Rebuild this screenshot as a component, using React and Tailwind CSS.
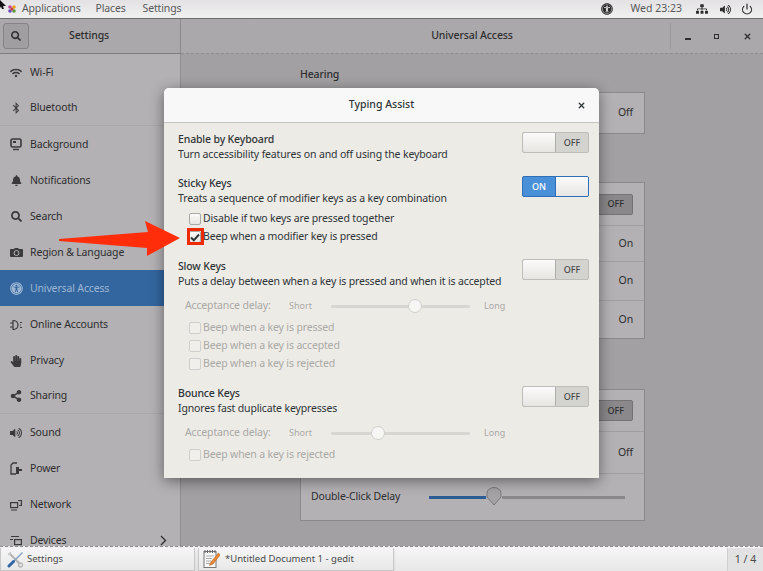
import {
  FaBell,
  FaBluetoothB,
  FaHandPaper,
  FaSearch,
  FaShareAlt,
  FaSitemap,
  FaUniversalAccess,
  FaVolumeUp,
  FaWifi,
} from 'react-icons/fa';
import { Power, X } from 'lucide-react';

const font = 'font-["Noto_Sans",sans-serif]';

// small symbolic icons that the packages don't have
function BackgroundIcon() {
  return (
    <svg width="12" height="13" viewBox="0 0 12 13" fill="none">
      <rect x="1" y="1" width="10" height="8" rx="1.5" stroke="#3a3a3c" strokeWidth="1.6" />
      <rect x="3" y="3" width="3" height="2" fill="#3a3a3c" />
      <path d="M3 11.5h6" stroke="#3a3a3c" strokeWidth="1.4" />
    </svg>
  );
}

function RegionIcon() {
  return (
    <svg width="13" height="11" viewBox="0 0 13 11">
      <path d="M1 2h3l1-1h3l1 1h3a1 1 0 0 1 1 1v6a1 1 0 0 1-1 1H1a1 1 0 0 1-1-1V3a1 1 0 0 1 1-1z" fill="#3a3a3c" />
      <circle cx="6.5" cy="6" r="2.5" fill="none" stroke="#b3b1b3" strokeWidth="1" />
    </svg>
  );
}

function AccountsIcon() {
  return (
    <svg width="13" height="12" viewBox="0 0 13 12" fill="none" stroke="#3a3a3c" strokeWidth="1.2">
      <path d="M0 4h3M0 8h3M3 1.5c3 0 5 2 5 4.5s-2 4.5-5 4.5z" />
      <path d="M10 3.5h2M10 6h1M10 8.5h2" strokeWidth="1" />
    </svg>
  );
}

function PowerIcon() {
  return (
    <svg width="12" height="13" viewBox="0 0 12 13" fill="none">
      <path d="M7 1H3L1 3v9h5" stroke="#3a3a3c" strokeWidth="1.3" />
      <path d="M6 5h3v2h3v2H9v3H6z" fill="#3a3a3c" />
    </svg>
  );
}

function NetworkIcon() {
  return (
    <svg width="12" height="12" viewBox="0 0 12 12" fill="none" stroke="#3a3a3c" strokeWidth="1.2">
      <rect x="0.6" y="3.6" width="7" height="5" />
      <path d="M1 11h6M8 1.5h3.4v5H9" />
    </svg>
  );
}

function DevicesIcon() {
  return (
    <svg width="12" height="11" viewBox="0 0 12 11" fill="none" stroke="#3a3a3c" strokeWidth="1.2">
      <path d="M1 1.5h8M0 4.5h3" />
      <rect x="4.6" y="4.6" width="6.8" height="5" />
    </svg>
  );
}

function FootLogo() {
  return (
    <svg width="10" height="10" viewBox="0 0 10 10">
      <circle cx="3" cy="3" r="1.8" fill="#c04a9a" />
      <circle cx="7" cy="3" r="1.8" fill="#e8a020" />
      <circle cx="3" cy="7" r="1.8" fill="#6a4ac0" />
      <circle cx="7" cy="7" r="1.8" fill="#5a9a40" />
      <circle cx="5" cy="5" r="1.5" fill="#d04040" />
    </svg>
  );
}

function SettingsAppIcon() {
  return (
    <svg width="17" height="17" viewBox="0 0 17 17" fill="none">
      <path d="M3 3l10 10" stroke="#b4b4b4" strokeWidth="2.2" />
      <path d="M1 3l2 .5.5-2.5" stroke="#c4c4c4" strokeWidth="1.6" />
      <path d="M15.5 1.5L6 11" stroke="#8aa4c4" strokeWidth="1.4" />
      <path d="M6.5 10.5L2 15" stroke="#3465a4" strokeWidth="3" strokeLinecap="round" />
      <circle cx="13.5" cy="14" r="2" stroke="#b8b8b8" strokeWidth="1.4" />
    </svg>
  );
}

function GeditIcon() {
  return (
    <svg width="17" height="20" viewBox="0 0 17 20" fill="none">
      <rect x="1" y="2.5" width="12" height="16" fill="#fafafa" stroke="#777" />
      <path d="M2 1v3M4.5 1v3M7 1v3M9.5 1v3M12 1v3" stroke="#666" />
      <path d="M3 7h8M3 9.5h6M3 12h5M3 14.5h4" stroke="#aaa" />
      <path d="M15.5 4L8 13l-1.5 3.5L10 15l7-9z" fill="#e9883a" stroke="#b85f12" strokeWidth=".6" />
    </svg>
  );
}

function ThumbPin() {
  return (
    <svg width="16" height="20" viewBox="0 0 16 20" className="shrink-0 -my-[4px]">
      <path d="M1 6a7 5.5 0 0 1 14 0v4l-7 8-7-8z" fill="#a4a2a4" stroke="#7a787a" />
    </svg>
  );
}

const navItems = [
  { label: 'Wi-Fi', icon: <FaWifi size={12} color="#3a3a3c" /> },
  { label: 'Bluetooth', icon: <FaBluetoothB size={12} color="#3a3a3c" />, divider: true },
  { label: 'Background', icon: <BackgroundIcon /> },
  { label: 'Notifications', icon: <FaBell size={11} color="#3a3a3c" /> },
  { label: 'Search', icon: <FaSearch size={11} color="#3a3a3c" /> },
  { label: 'Region & Language', icon: <RegionIcon /> },
  { label: 'Universal Access', icon: <FaUniversalAccess size={13} color="#9db6d4" />, active: true },
  { label: 'Online Accounts', icon: <AccountsIcon /> },
  { label: 'Privacy', icon: <FaHandPaper size={12} color="#3a3a3c" /> },
  { label: 'Sharing', icon: <FaShareAlt size={12} color="#3a3a3c" />, divider: true },
  { label: 'Sound', icon: <FaVolumeUp size={12} color="#3a3a3c" /> },
  { label: 'Power', icon: <PowerIcon /> },
  { label: 'Network', icon: <NetworkIcon /> },
  { label: 'Devices', icon: <DevicesIcon />, more: true },
];

function TopBar() {
  return (
    <div className="h-[19px] shrink-0 flex items-center bg-gradient-to-b from-[#e4e2e4] to-[#f0f0f0] border-b border-[#6f6d6f] pl-[7px] pr-[10px] text-[10.5px] tracking-[-0.15px] text-[#59595b]">
      <FootLogo />
      <span className="ml-[5px]">Applications</span>
      <span className="ml-[15px]">Places</span>
      <span className="ml-[17px]">Settings</span>
      <div className="ml-auto flex items-center">
        <FaUniversalAccess size={12} color="#2e2e2e" />
        <span className="ml-[17px] tracking-normal">Wed 23:23</span>
        <FaSitemap size={12} color="#2e2e2e" className="ml-[14px]" />
        <FaVolumeUp size={11} color="#2e2e2e" className="ml-[12px]" />
        <Power size={12} color="#2e2e2e" strokeWidth={2.4} className="ml-[10px]" />
      </div>
    </div>
  );
}

function HeaderBar() {
  return (
    <div className="h-[35px] shrink-0 flex bg-[#aaa8aa] border-b border-[#7f7d7f] text-[10.5px] tracking-[-0.1px] font-medium text-[#2e2e30]">
      <div className="w-[181px] shrink-0 flex items-center border-r border-[#8b898b] pl-[3px]">
        <div className="w-[26px] h-[26px] flex items-center justify-center rounded-[3px] border border-[#858385] bg-[#a09ea0]">
          <FaSearch size={10} color="#2e2e30" />
        </div>
        <span className="ml-[40px]">Settings</span>
      </div>
      <div className="w-[93px] shrink-0" />
      <div className="flex-1 flex items-center justify-center">Universal Access</div>
      <div className="w-[93px] shrink-0 flex items-center my-[4px] border-l border-[#999799] pl-[14px] gap-[20px]">
        <div className="w-[6px] h-[2px] mt-[5px] bg-[#2e2e30]" />
        <div className="w-[5px] h-[5px] ml-[3px] border border-[#2e2e30]" />
        <X size={9} strokeWidth={3.5} color="#2e2e30" className="ml-[4px]" />
      </div>
    </div>
  );
}

function Sidebar() {
  return (
    <div className="w-[181px] shrink-0 bg-[#b3b1b3] border-r border-[#8f8d8f] overflow-hidden text-[10.5px] tracking-[-0.15px] text-[#2e2e30]">
      {navItems.map((item) => (
        <div
          key={item.label}
          className={`h-9 flex items-center pl-[9px] pt-px ${item.active ? 'bg-[#33669f] text-[#9db6d4]' : ''} ${item.divider ? 'border-b border-[#aaa8aa]' : ''}`}
        >
          <span className="w-[14px] flex justify-center">{item.icon}</span>
          <span className="ml-[7px]">{item.label}</span>
          {item.more && (
            <svg width="7" height="11" viewBox="0 0 7 11" fill="none" className="ml-auto mr-[13px]">
              <path d="M1 1l4.5 4.5L1 10" stroke="#2e2e30" strokeWidth="1.3" />
            </svg>
          )}
        </div>
      ))}
    </div>
  );
}

function BackRow({ label, children, h, last }) {
  return (
    <div className={`flex items-center justify-between pl-[10px] pr-[11px] ${last ? '' : 'border-b border-[#a09ea0]'}`} style={{ height: h }}>
      <span>{label}</span>
      {children}
    </div>
  );
}

function BackToggle() {
  return (
    <div className="w-[60px] h-[21px] flex justify-end items-center border border-[#747274] rounded-[2px] bg-[#8a888a] pr-[8px] text-[9px] font-medium tracking-normal text-[#2e2e30]">OFF</div>
  );
}

// settings page behind the dialog
function Content() {
  return (
    <div className="flex-1 bg-[#a2a0a2] border-t border-dashed border-[#8f8d8f] -mt-px pl-[119px] text-[10.5px] tracking-[-0.15px] text-[#2e2e30] overflow-hidden">
      <div className="w-[345px]">
        <div className="h-[38px] flex items-end pb-[9px] font-medium">Hearing</div>
        <div className="h-[42px] border border-[#8b898b] bg-[#b3b1b3] flex items-center justify-end pr-[11px]">Off</div>
        <div className="mt-[48px] border border-[#8b898b] bg-[#b3b1b3]">
          <BackRow label="" h={43}><BackToggle /></BackRow>
          <BackRow label="" h={36}>On</BackRow>
          <BackRow label="" h={39}>On</BackRow>
          <BackRow label="" h={37} last>On</BackRow>
        </div>
        <div className="mt-[50px] border border-[#8b898b] bg-[#b3b1b3]">
          <BackRow label="" h={42}><BackToggle /></BackRow>
          <BackRow label="" h={42}>Off</BackRow>
          <BackRow label="Double-Click Delay" h={46} last>
            <div className="w-[196px] mr-[8px] flex items-center">
              <div className="w-[57px] h-[3px] bg-[#2c5c94]" />
              <ThumbPin />
              <div className="flex-1 h-[3px] bg-[#8a888a]" />
            </div>
          </BackRow>
        </div>
      </div>
    </div>
  );
}

function Toggle({ on }) {
  const knob = <div className={`w-[33px] h-full bg-gradient-to-b from-[#fbfbfb] to-[#e6e5e2] ${on ? 'border-l border-[#2f6fb5]' : 'border-r border-[#adadaa] rounded-l-[2px]'}`} />;
  if (on) {
    return (
      <div className="w-[67px] h-[21px] flex border border-[#2f6fb5] rounded-[2px] overflow-hidden bg-[#4a90d9]">
        <div className="flex-1 flex items-center justify-center text-[9px] font-medium tracking-normal text-white">ON</div>
        {knob}
      </div>
    );
  }
  return (
    <div className="w-[67px] h-[21px] flex border border-[#bdbdb9] rounded-[2px] overflow-hidden bg-[#d3d3d0]">
      {knob}
      <div className="flex-1 flex items-center justify-center text-[9px] font-medium tracking-normal text-[#4a4a4a]">OFF</div>
    </div>
  );
}

function CheckRow({ label, checked, disabled }) {
  return (
    <div className={`h-[18px] flex items-center pl-[11px] ${disabled ? 'text-[#a9a9a5]' : 'text-[#2e3436]'}`}>
      <div className={`w-[12px] h-[12px] rounded-[2px] border flex items-center justify-center ${disabled ? 'border-[#cfcfcb] bg-[#f0efec]' : 'border-[#a9a9a5] bg-gradient-to-b from-[#fbfbfb] to-[#e6e5e2]'}`}>
        {checked && (
          <svg width="10" height="9" viewBox="0 0 10 9" fill="none">
            <path d="M1 4.5l2.8 2.8L9 1.5" stroke="#2e3436" strokeWidth="2" />
          </svg>
        )}
      </div>
      <span className="ml-[2px]">{label}</span>
    </div>
  );
}

function Delay({ left }) {
  return (
    <div className="h-[18px] flex items-center pl-[7px] text-[#a9a9a5]">
      <span className="w-[104px]">Acceptance delay:</span>
      <span className="w-[42px] text-[9px] tracking-normal">Short</span>
      <div className="w-[139px] flex items-center">
        <div className="h-[3px] bg-[#d6d6d2] rounded-l-full" style={{ width: left }} />
        <div className="w-[14px] h-[14px] shrink-0 rounded-full bg-[#f6f6f4] border border-[#cfcfcb]" />
        <div className="flex-1 h-[3px] bg-[#d6d6d2] rounded-r-full" />
      </div>
      <span className="ml-[14px] text-[9px] tracking-normal">Long</span>
    </div>
  );
}

function Section({ title, desc, on, className }) {
  return (
    <div className={`flex justify-between pl-[14px] pr-[10px] ${className}`}>
      <div className="leading-[15px] whitespace-nowrap">
        <div className="font-medium text-[#2e3436]">{title}</div>
        <div className="text-[#2e3436]">{desc}</div>
      </div>
      <Toggle on={on} />
    </div>
  );
}

function Dialog() {
  return (
    <div className="absolute left-[164px] top-[88px] w-[435px] h-[390px] rounded-t-[5px] bg-[#edebe6] shadow-[0_3px_14px_rgba(0,0,0,0.45)] text-[10.5px] tracking-[-0.15px] overflow-hidden">
      <div className="h-[35px] flex items-center justify-center relative bg-[#f8f8f8] border-b border-[#c4c3bf] font-medium tracking-normal text-[#2e3436]">
        Typing Assist
        <X size={9} strokeWidth={3.5} color="#2e3436" className="absolute right-[13px]" />
      </div>
      <div className="pt-[9px]">
        <Section title="Enable by Keyboard" desc="Turn accessibility features on and off using the keyboard" />
        <Section className="mt-[14px]" title="Sticky Keys" desc="Treats a sequence of modifier keys as a key combination" on />
        <div className="mt-[4px] pl-[14px]">
          <CheckRow label="Disable if two keys are pressed together" />
          <CheckRow label="Beep when a modifier key is pressed" checked />
        </div>
        <Section className="mt-[13px]" title="Slow Keys" desc="Puts a delay between when a key is pressed and when it is accepted" />
        <div className="mt-[8px] pl-[14px]">
          <Delay left={77} />
        </div>
        <div className="mt-[4px] pl-[14px]">
          <CheckRow label="Beep when a key is pressed" disabled />
          <CheckRow label="Beep when a key is accepted" disabled />
          <CheckRow label="Beep when a key is rejected" disabled />
        </div>
        <Section className="mt-[13px]" title="Bounce Keys" desc="Ignores fast duplicate keypresses" />
        <div className="mt-[8px] pl-[14px]">
          <Delay left={40} />
        </div>
        <div className="mt-[4px] pl-[14px]">
          <CheckRow label="Beep when a key is rejected" disabled />
        </div>
      </div>
    </div>
  );
}

function TaskBar() {
  return (
    <div className="h-[25px] shrink-0 flex items-stretch bg-gradient-to-b from-[#f6f6f6] to-[#e8e8e8] border-t border-dashed border-[#8f8d8f] text-[9.5px] text-[#4a4a4a] pt-px">
      <div className="w-[195px] flex items-center pl-[6px] border border-t-0 border-[#c8c8c8] shadow-sm">
        <SettingsAppIcon />
        <span className="ml-[3px]">Settings</span>
      </div>
      <div className="w-[196px] ml-[3px] flex items-center pl-[4px] border border-t-0 border-[#c8c8c8] shadow-sm">
        <GeditIcon />
        <span className="ml-[5px]">*Untitled Document 1 - gedit</span>
      </div>
      <div className="ml-auto w-[36px] flex items-center justify-center bg-[#e2e2e2] border-l border-[#d0d0d0] text-[10.5px]">1 / 4</div>
    </div>
  );
}

// red callout arrow and box from the annotated screenshot
function Callout() {
  return (
    <>
      <svg width="130" height="40" viewBox="0 0 130 40" className="absolute left-[56px] top-[220px]">
        <path d="M3 19L92 12L89 1L124 18L91 36L91 28L3 21z" fill="#ff2d0a" />
      </svg>
      <div className="absolute left-[187px] top-[228px] w-[17px] h-[17px] border-[3px] border-[#ee2a05]" />
      {/* mouse pointer caught in the corner */}
      <svg width="6" height="9" viewBox="0 0 6 9" className="absolute left-0 top-0">
        <path d="M0 0l6 6H3l1 3H2L1 6.500 0 8z" fill="#111" />
      </svg>
    </>
  );
}

export default function App() {
  return (
    <div className={`relative w-[763px] h-[571px] flex flex-col overflow-hidden ${font}`}>
      <TopBar />
      <HeaderBar />
      <div className="flex-1 flex min-h-0">
        <Sidebar />
        <Content />
      </div>
      <TaskBar />
      <Dialog />
      <Callout />
    </div>
  );
}
